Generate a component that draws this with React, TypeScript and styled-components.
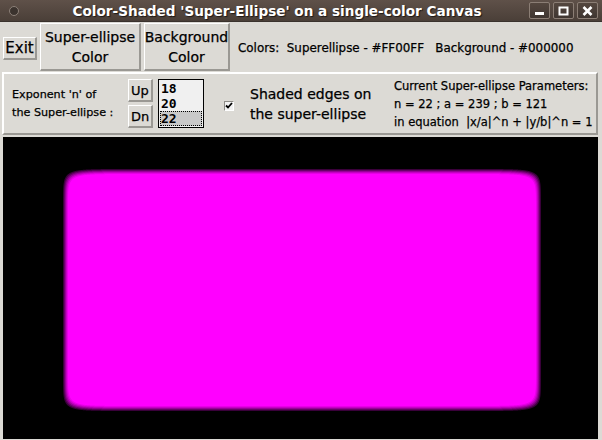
import React from "react";
import styled, { createGlobalStyle } from "styled-components";

const GlobalStyle = createGlobalStyle`
  html, body {
    margin: 0;
    padding: 0;
    background: #dcdad5;
  }
  body {
    font-family: "DejaVu Sans", "Liberation Sans", sans-serif;
    color: #000;
  }
`;

const N = 22;
const A = 239;
const B = 121;

function superEllipsePath(a: number, b: number, n: number, cx: number, cy: number) {
  const pts: string[] = [];
  const steps = 720;
  for (let i = 0; i < steps; i++) {
    const t = (i / steps) * Math.PI * 2;
    const c = Math.cos(t);
    const s = Math.sin(t);
    const x = cx + a * Math.sign(c) * Math.pow(Math.abs(c), 2 / n);
    const y = cy + b * Math.sign(s) * Math.pow(Math.abs(s), 2 / n);
    pts.push(`${x.toFixed(2)},${y.toFixed(2)}`);
  }
  return "M" + pts.join(" L") + " Z";
}

const shades = ["#3a003a", "#6a006a", "#990099", "#c400c4", "#e600e6", "#ff00ff"];

export default function App() {
  return (
    <>
      <GlobalStyle />
      <Window>
        <TitleBar>
          <TitleDot />
          <Title>Color-Shaded 'Super-Ellipse' on a single-color Canvas</Title>
          <WinButtons>
            <WinButton>
              <svg width="11" height="9" viewBox="0 0 11 9">
                <rect x="1" y="6" width="9" height="3" fill="#fff" />
              </svg>
            </WinButton>
            <WinButton>
              <svg width="11" height="10" viewBox="0 0 11 10">
                <rect x="1.5" y="1.5" width="8" height="7" fill="none" stroke="#fff" strokeWidth="2" />
              </svg>
            </WinButton>
            <WinButton>
              <svg width="11" height="10" viewBox="0 0 11 10">
                <path d="M1.5 1 L9.5 9 M9.5 1 L1.5 9" stroke="#fff" strokeWidth="2.6" />
              </svg>
            </WinButton>
          </WinButtons>
        </TitleBar>

        <TopRow>
          <TkButton $small>Exit</TkButton>
          <TkButton $width={101}>
            Super-ellipse
            <br />
            Color
          </TkButton>
          <TkButton $width={86}>
            Background
            <br />
            Color
          </TkButton>
          <ColorsLabel>Colors:  Superellipse - #FF00FF   Background - #000000</ColorsLabel>
        </TopRow>

        <ParamFrame>
          <ExponentLabel>
            Exponent 'n' of
            <br />
            the Super-ellipse :
          </ExponentLabel>
          <UpDn>
            <SmallButton>Up</SmallButton>
            <SmallButton>Dn</SmallButton>
          </UpDn>
          <ListBox>
            <ListItem>18</ListItem>
            <ListItem>20</ListItem>
            <ListItem $selected>22</ListItem>
          </ListBox>
          <Check>
            <svg width="8" height="7" viewBox="0 0 8 7">
              <path d="M1 3.5 L3 5.5 L7 1" fill="none" stroke="#000" strokeWidth="1.8" />
            </svg>
          </Check>
          <ShadedLabel>
            Shaded edges on
            <br />
            the super-ellipse
          </ShadedLabel>
          <Params>
            <div>Current Super-ellipse Parameters:</div>
            <div>
              n = {N} ; a = {A} ; b = {B}
            </div>
            <div>in equation  |x/a|^n + |y/b|^n = 1</div>
          </Params>
        </ParamFrame>

        <Canvas>
          <svg width="100%" height="100%" viewBox="0 0 595 302" preserveAspectRatio="none">
            {shades.map((c, i) => (
              <path key={c} d={superEllipsePath(A - i, B - i, N, 299, 153)} fill={c} />
            ))}
          </svg>
        </Canvas>
      </Window>
    </>
  );
}

const Window = styled.div`
  width: 602px;
  height: 440px;
  display: flex;
  flex-direction: column;
  background: #dcdad5;
  overflow: hidden;
  -webkit-text-stroke: 0.25px #000;
`;

const TitleBar = styled.div`
  height: 22px;
  flex: none;
  display: flex;
  align-items: center;
  background: linear-gradient(#5f5149, #4a3f38);
  border-bottom: 1px solid #3a322d;
  box-sizing: border-box;
  -webkit-text-stroke: 0;
`;

const TitleDot = styled.div`
  width: 8px;
  height: 8px;
  margin-left: 9px;
  border-radius: 50%;
  background: #3b332e;
  border: 1px solid #8c8078;
`;

const Title = styled.div`
  flex: 1;
  text-align: center;
  color: #fff;
  font-family: "DejaVu Sans", sans-serif;
  font-weight: bold;
  font-size: 13.6px;
  text-shadow: 1px 1px 1px #1e1815;
  padding-left: 6px;
`;

const WinButtons = styled.div`
  display: flex;
  gap: 3px;
  margin-right: 4px;
`;

const WinButton = styled.div`
  width: 21px;
  height: 17px;
  box-sizing: border-box;
  border: 1px solid #8b7e75;
  border-radius: 2px;
  background: linear-gradient(#54473f, #3f3631);
  display: flex;
  align-items: center;
  justify-content: center;
`;

const TopRow = styled.div`
  height: 50px;
  flex: none;
  display: flex;
  align-items: center;
  gap: 3px;
  padding-left: 3px;
`;

const TkButton = styled.div<{ $small?: boolean; $width?: number }>`
  box-sizing: border-box;
  width: ${(p) => (p.$small ? 34 : p.$width ?? 80)}px;
  height: ${(p) => (p.$small ? 23 : 48)}px;
  display: flex;
  flex-direction: column;
  align-items: center;
  justify-content: center;
  text-align: center;
  font-size: ${(p) => (p.$small ? 15 : 14)}px;
  line-height: 20px;
  background: #dcdad5;
  border-top: 1px solid #fff;
  border-left: 1px solid #fff;
  border-right: 2px solid #9a9893;
  border-bottom: 2px solid #9a9893;
  margin-top: ${(p) => (p.$small ? 3 : 0)}px;
`;

const ColorsLabel = styled.div`
  margin-left: 5px;
  margin-top: 2px;
  font-size: 11.9px;
  white-space: pre;
`;

const ParamFrame = styled.div`
  height: 63px;
  flex: none;
  box-sizing: border-box;
  margin: 0 4px 0 2px;
  border-top: 2px solid #fff;
  border-left: 2px solid #fff;
  border-right: 2px solid #9a9893;
  border-bottom: 2px solid #9a9893;
  display: flex;
  align-items: center;
  padding-left: 8px;
`;

const ExponentLabel = styled.div`
  width: 116px;
  font-size: 11.2px;
  line-height: 18px;
  white-space: nowrap;
`;

const UpDn = styled.div`
  display: flex;
  flex-direction: column;
  gap: 3px;
  margin-right: 5px;
`;

const SmallButton = styled.div`
  width: 25px;
  height: 23px;
  box-sizing: border-box;
  display: flex;
  align-items: center;
  justify-content: center;
  font-size: 13px;
  border-top: 1px solid #fff;
  border-left: 1px solid #fff;
  border-right: 2px solid #9a9893;
  border-bottom: 2px solid #9a9893;
`;

const ListBox = styled.div`
  width: 46px;
  height: 49px;
  box-sizing: border-box;
  border: 1px solid #000;
  background: #f0f0f0;
  padding: 1px;
  display: flex;
  flex-direction: column;
  -webkit-text-stroke: 0;
`;

const ListItem = styled.div<{ $selected?: boolean }>`
  height: 15px;
  line-height: 15px;
  font-family: "DejaVu Sans Mono", monospace;
  font-weight: bold;
  font-size: 13px;
  padding-left: 1px;
  box-sizing: border-box;
  background: ${(p) => (p.$selected ? "#c9c9c9" : "transparent")};
  outline: ${(p) => (p.$selected ? "1px dotted #000" : "none")};
  outline-offset: -1px;
`;

const Check = styled.div`
  width: 10px;
  height: 10px;
  box-sizing: border-box;
  margin: 4px 16px 0 20px;
  border: 1px solid #fff;
  border-top-color: #8e8c87;
  border-left-color: #8e8c87;
  background: #f2f2f2;
  display: flex;
  align-items: center;
  justify-content: center;
`;

const ShadedLabel = styled.div`
  width: 144px;
  font-size: 14px;
  line-height: 20px;
  white-space: nowrap;
`;

const Params = styled.div`
  font-size: 11.5px;
  line-height: 18px;
  white-space: pre;
`;

const Canvas = styled.div`
  flex: 1;
  margin: 2px 4px 2px 3px;
  background: #000;
  display: flex;
`;
